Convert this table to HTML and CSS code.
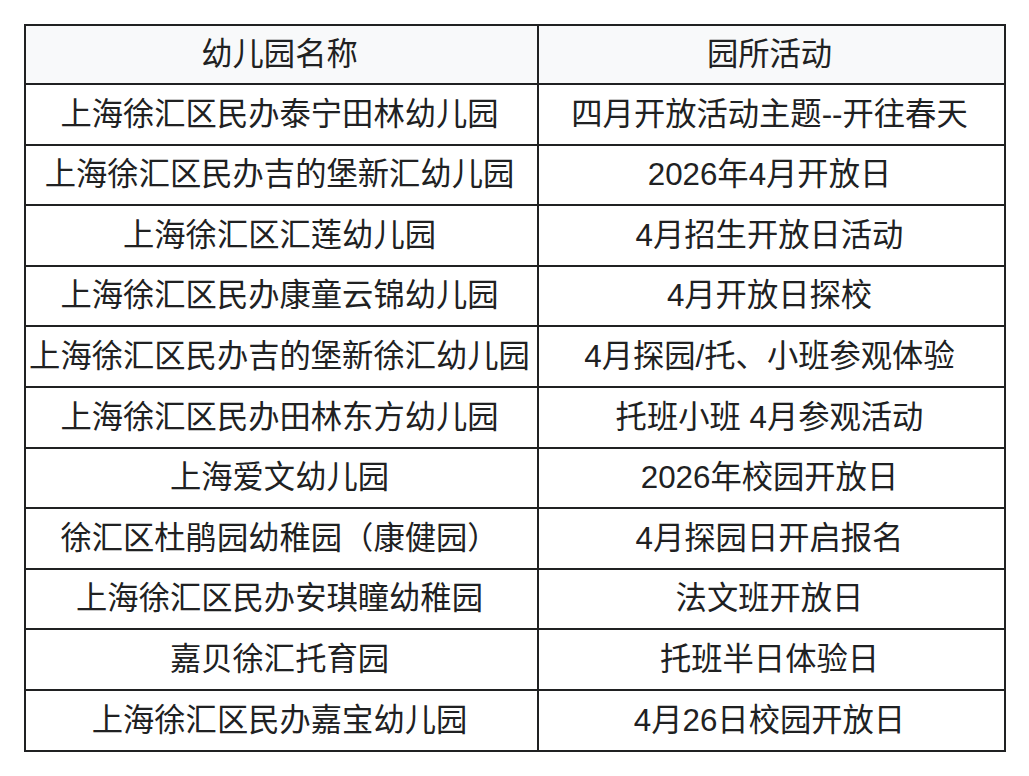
FILE: index.html
```html
<!DOCTYPE html>
<html lang="zh">
<head>
<meta charset="utf-8">
<title>幼儿园开放日</title>
<link rel="stylesheet" href="styles.css">
</head>
<body>
<table class="kg-table">
  <colgroup>
    <col class="col-name">
    <col class="col-act">
  </colgroup>
  <thead>
    <tr><th>幼儿园名称</th><th>园所活动</th></tr>
  </thead>
  <tbody>
    <tr><td>上海徐汇区民办泰宁田林幼儿园</td><td>四月开放活动主题--开往春天</td></tr>
    <tr><td>上海徐汇区民办吉的堡新汇幼儿园</td><td>2026年4月开放日</td></tr>
    <tr><td>上海徐汇区汇莲幼儿园</td><td>4月招生开放日活动</td></tr>
    <tr><td>上海徐汇区民办康童云锦幼儿园</td><td>4月开放日探校</td></tr>
    <tr><td>上海徐汇区民办吉的堡新徐汇幼儿园</td><td>4月探园/托、小班参观体验</td></tr>
    <tr><td>上海徐汇区民办田林东方幼儿园</td><td>托班小班 4月参观活动</td></tr>
    <tr><td>上海爱文幼儿园</td><td>2026年校园开放日</td></tr>
    <tr><td>徐汇区杜鹃园幼稚园（康健园）</td><td>4月探园日开启报名</td></tr>
    <tr><td>上海徐汇区民办安琪瞳幼稚园</td><td>法文班开放日</td></tr>
    <tr><td>嘉贝徐汇托育园</td><td>托班半日体验日</td></tr>
    <tr><td>上海徐汇区民办嘉宝幼儿园</td><td>4月26日校园开放日</td></tr>
  </tbody>
</table>
</body>
</html>
```
FILE: styles.css
```css
html, body {
  margin: 0;
  padding: 0;
  background: #ffffff;
}
body {
  padding: 24px 0 0 24px;
  font-family: "Liberation Sans", "Noto Sans CJK SC", sans-serif;
  color: #202122;
}
.kg-table {
  border-collapse: collapse;
  table-layout: fixed;
  width: 980px;
  border: 2px solid #202122;
}
.col-name { width: 513px; }
.col-act { width: 467px; }
.kg-table th,
.kg-table td {
  border: 2px solid #202122;
  padding: 0 6px 0 2px;
  text-align: center;
  vertical-align: middle;
  font-size: 31.3px;
  font-weight: normal;
  line-height: 1;
  white-space: nowrap;
  overflow: hidden;
}
.kg-table thead th {
  background: #f8f9fa;
  height: 57px;
}
.kg-table tbody td {
  height: 58.6px;
}
```
